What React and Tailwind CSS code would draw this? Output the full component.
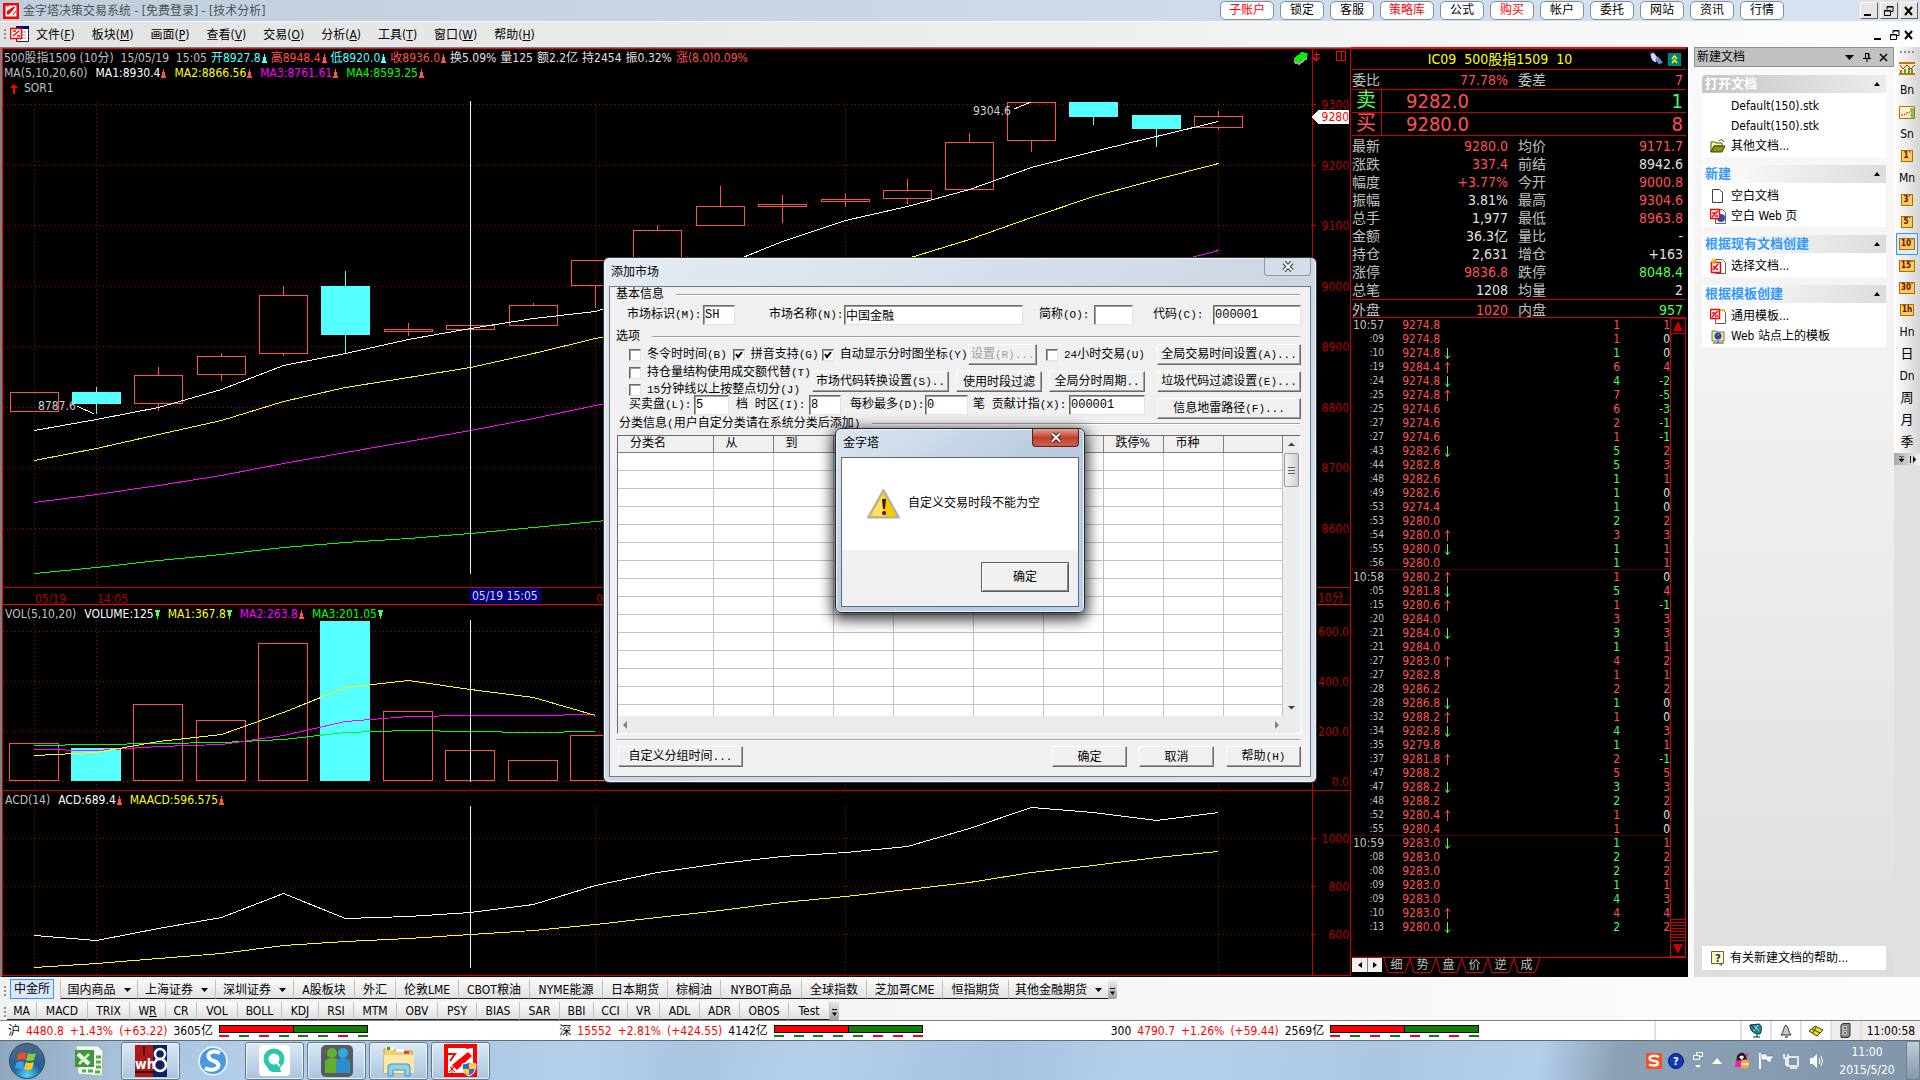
import React from "react";

const RED = "#ff5050";
const CYAN = "#54ffff";

const candleX = [34, 96, 158, 221, 283, 345, 408, 470, 533, 595, 657, 720, 782, 845, 907, 969, 1031, 1093, 1156, 1218];

// [body top, body bottom, high, low, falling]
const candles = [
  [392, 411, 392, 411, false],
  [392, 403, 387, 414, true],
  [375, 403, 367, 411, false],
  [356, 374, 353, 381, false],
  [295, 353, 286, 356, false],
  [286, 334, 271, 354, true],
  [329, 331, 323, 336, false],
  [325, 329, 325, 329, false],
  [305, 325, 303, 325, false],
  [260, 285, 260, 308, false],
  [230, 262, 225, 262, false],
  [206, 225, 186, 225, false],
  [204, 206, 195, 223, false],
  [199, 201, 194, 207, false],
  [190, 198, 179, 204, false],
  [142, 189, 133, 189, false],
  [102, 140, 102, 152, false],
  [102, 116, 102, 125, true],
  [115, 128, 115, 147, true],
  [116, 127, 111, 130, false],
];

const volumeTops = [743, 748, 704, 720, 643, 621, 711, 750, 760, 735];
const line = (ys, xs = candleX) => ys.map((y, i) => `${xs[i] + 0.5},${y + 0.5}`).join(" ");

const ma1 = line([430, 419, 407, 389, 365, 353, 339, 328, 318, 311, 290, 266, 241, 220, 206, 189, 167, 151, 136, 121]);
const ma2 = line([460, 448, 434, 420, 401, 387, 377, 367, 353, 338, 325, 308, 291, 275, 258, 239, 217, 196, 179, 163]);
const ma3 = line([502, 494, 485, 475, 463, 452, 441, 430, 418, 405, 392, 378, 364, 349, 333, 317, 300, 283, 266, 250]);
const ma4 = line([573, 567, 560, 554, 547, 542, 538, 533, 527, 521, 515, 508, 501, 494, 486, 478, 470, 462, 454, 446]);
const vma1 = line([755, 752, 741, 734, 712, 687, 680, 689, 697, 715]);
const vma2 = line([749, 750, 746, 744, 735, 721, 716, 715, 715, 714]);
const vma3 = line([745, 744, 743, 742, 739, 732, 730, 731, 732, 731]);
const acd = line([935, 940, 928, 917, 893, 918, 916, 912, 904, 885, 872, 863, 856, 852, 846, 828, 807, 812, 820, 812]);
const maacd = line([967, 963, 958, 953, 945, 941, 938, 934, 930, 924, 917, 910, 902, 896, 889, 882, 872, 865, 857, 851]);

const gridX = [34, 96, 470, 595, 845, 1218];

function Grid({ ys, labels, top, bottom }) {
  return (
    <g>
      <g stroke="#b00000" strokeDasharray="1 3" fill="none">
        {ys.map((y) => <path key={y} d={`M3 ${y}.5H1312`} />)}
        {gridX.map((x) => <path key={x} d={`M${x}.5 ${top}V${bottom}`} />)}
      </g>
      <g fill="#b40000" fontSize="12" textAnchor="end">
        {ys.map((y, i) => <text key={y} x="1349" y={y + 5}>{labels[i]}</text>)}
      </g>
      <g stroke="#c80000">{ys.map((y) => <path key={y} d={`M1312 ${y}.5h4`} />)}</g>
    </g>
  );
}

const Up = () => <svg className="inline-block" width="6" height="10" viewBox="0 0 6 10"><path d="M3 0h1v3h1v4h1v2H1V7h1V3h1z" fill={RED} /></svg>;
const UpC = () => <svg className="inline-block" width="6" height="10" viewBox="0 0 6 10"><path d="M3 0h1v3h1v4h1v2H1V7h1V3h1z" fill={CYAN} /></svg>;
const Dn = () => <svg className="inline-block" width="6" height="10" viewBox="0 0 6 10"><path d="M1 0h5v2H5v4H4v3H3V6H2V2H1z" fill="#50ff50" /></svg>;

function Charts() {
  return (
    <section className="flex min-w-0 flex-1 flex-col bg-black text-[12px] leading-[15px] whitespace-nowrap">
      <div className="grid min-h-0 flex-[558_1_0px]">
        <svg className="col-start-1 row-start-1 h-full w-full" viewBox="0 47 1351 558" preserveAspectRatio="none" shapeRendering="crispEdges">
          <rect x="0" y="47" width="2" height="558" fill="#808080" />
          <rect x="0" y="47" width="1351" height="1" fill="#808080" />
          <Grid ys={[104, 165, 225, 286, 346, 407, 467, 528]} labels={["9300", "9200", "9100", "9000", "8900", "8800", "8700", "8600"]} top={101} bottom={587} />
          <g stroke="#ff0000" fill="none">
            <path d="M2 48.5H1351M2.5 48V605M2 604.5H1351" />
            <path d="M3 587.5H1351M1312.5 49V605M1350.5 49V605" stroke="#c80000" />
          </g>
          {candles.map(([t, b, h, l, fall], i) => {
            const x = candleX[i];
            return (
              <g key={x} stroke={fall ? CYAN : RED} fill={fall ? CYAN : "none"}>
                {h < t && <path d={`M${x}.5 ${h}V${t}`} />}
                {l > b && <path d={`M${x}.5 ${b}V${l}`} />}
                <rect x={x - 23.5} y={t + 0.5} width="48" height={b - t} />
              </g>
            );
          })}
          <g fill="none">
            <polyline points={ma4} stroke="#00ff00" />
            <polyline points={ma3} stroke="#ff00ff" />
            <polyline points={ma2} stroke="#ffff00" />
            <path d="M470.5 101V574" stroke="#d8ffff" />
            <polyline points={ma1} stroke="#ffffff" />
            <path d="M77 406 94 414M1014 109 1031 102" stroke="#ffffff" />
          </g>
          <g fontSize="12" fill="#c8d0d8">
            <text x="38" y="410">8787.6</text>
            <text x="973" y="115">9304.6</text>
          </g>
          <g fontSize="12" fill="#b40000">
            <text x="35" y="603">05/19</text>
            <text x="97" y="603">14:05</text>
            <text x="596" y="603">09:25</text>
            <text x="1318" y="602">10分</text>
          </g>
          <rect x="470" y="588" width="71" height="15" fill="#000080" />
          <text x="472" y="600" fontSize="12" fill="#d8d8e8">05/19 15:05</text>
          <path d="M1312 117 1318 110H1349V124H1318z" fill="#fff" />
          <text x="1349" y="121" fontSize="12" textAnchor="end" fill="#ff0000">9280</text>
          <g>
            <path d="M1294 58 1302 52 1308 54 1307 57 1299 63 1294 61z" fill="#00f000" />
            <path d="M1294 62 1299 64 1307 58" stroke="#a0a0a0" strokeWidth="2" fill="none" />
            <path d="M1316.500 52V61M1314 54H1320M1313 57 1316 61 1320 57" stroke="#f00" fill="none" />
            <rect x="1336.500" y="51.500" width="9" height="9" stroke="#f00" fill="none" />
            <path d="M1341.500 52V61" stroke="#f00" />
          </g>
        </svg>
        <div className="col-start-1 row-start-1 self-start pt-1 pl-1 text-[#c0c0c0]">
          <div className="flex gap-1">
            <span>500股指1509 (10分)&nbsp; 15/05/19&nbsp; 15:05</span>
            <span className="text-[#54ffff]">开8927.8<UpC /></span>
            <span className="text-[#ff5050]">高8948.4<Up /></span>
            <span className="text-[#54ffff]">低8920.0<UpC /></span>
            <span className="text-[#ff5050]">收8936.0<Up /></span>
            <span className="text-[#e0e0e0]">换5.09%</span>
            <span className="text-[#e0e0e0]">量125</span>
            <span className="text-[#e0e0e0]">额2.2亿</span>
            <span className="text-[#e0e0e0]">持2454</span>
            <span className="text-[#e0e0e0]">振0.32%</span>
            <span className="text-[#ff5050]">涨(8.0)0.09%</span>
          </div>
          <div className="flex gap-2">
            <span>MA(5,10,20,60)</span>
            <span className="text-white">MA1:8930.4<Up /></span>
            <span className="text-[#ffff00]">MA2:8866.56<Up /></span>
            <span className="text-[#ff00ff]">MA3:8761.61<Up /></span>
            <span className="text-[#00ff00]">MA4:8593.25<Up /></span>
          </div>
          <div className="flex items-center gap-1 pl-1">
            <svg width="12" height="10" viewBox="0 0 12 10"><path d="M6 0 10 4H7V10H5V4H2z" fill="#f00" /></svg>
            <span>SOR1</span>
          </div>
        </div>
      </div>
      <div className="grid min-h-0 flex-[186_1_0px]">
        <svg className="col-start-1 row-start-1 h-full w-full" viewBox="0 605 1351 186" preserveAspectRatio="none" shapeRendering="crispEdges">
          <rect x="0" y="605" width="2" height="186" fill="#808080" />
          <Grid ys={[631, 681, 731, 781]} labels={["600.0", "400.0", "200.0", "0.0"]} top={620} bottom={790} />
          <path d="M2.500 605V791M2 790.5H1351M1312.500 605V791M1350.500 605V791" stroke="#c80000" fill="none" />
          {volumeTops.map((t, i) => {
            const fall = i === 1 || i === 5;
            return <rect key={i} x={candleX[i] - 24.5} y={t + 0.5} width="49" height={780 - t} stroke={fall ? CYAN : RED} fill={fall ? CYAN : "none"} />;
          })}
          <g fill="none">
            <polyline points={vma3} stroke="#00ff00" />
            <polyline points={vma2} stroke="#ff00ff" />
            <polyline points={vma1} stroke="#ffff00" />
            <path d="M470.500 620V782" stroke="#d8ffff" />
          </g>
        </svg>
        <div className="col-start-1 row-start-1 flex gap-2 self-start pt-[2px] pl-[5px]">
          <span className="text-[#c0c0c0]">VOL(5,10,20)</span>
          <span className="text-white">VOLUME:125<Dn /></span>
          <span className="text-[#ffff00]">MA1:367.8<Dn /></span>
          <span className="text-[#ff00ff]">MA2:263.8<Up /></span>
          <span className="text-[#00ff00]">MA3:201.05<Dn /></span>
        </div>
      </div>
      <div className="grid min-h-0 flex-[186_1_0px]">
        <svg className="col-start-1 row-start-1 h-full w-full" viewBox="0 791 1351 186" preserveAspectRatio="none" shapeRendering="crispEdges">
          <rect x="0" y="791" width="2" height="186" fill="#808080" />
          <Grid ys={[838, 886, 934]} labels={["1000", "800", "600"]} top={806} bottom={975} />
          <path d="M2.500 791V976M2 975.5H1351M1312.500 791V976M1350.500 791V976" stroke="#c80000" fill="none" />
          <g fill="none">
            <polyline points={maacd} stroke="#ffff00" />
            <polyline points={acd} stroke="#ffffff" />
            <path d="M470.500 806V968" stroke="#d8ffff" />
          </g>
        </svg>
        <div className="col-start-1 row-start-1 flex gap-2 self-start pt-[2px] pl-[5px]">
          <span className="text-[#c0c0c0]">ACD(14)</span>
          <span className="text-white">ACD:689.4<Up /></span>
          <span className="text-[#ffff00]">MAACD:596.575<Up /></span>
        </div>
      </div>
    </section>
  );
}

const R = "text-[#ff5050]";
const G = "text-[#50ff50]";
const W = "text-[#e0e0e0]";

const quoteRows = [
  ["最新", "9280.0", R, "均价", "9171.7", R],
  ["涨跌", "337.4", R, "前结", "8942.6", W],
  ["幅度", "+3.77%", R, "今开", "9000.8", R],
  ["振幅", "3.81%", W, "最高", "9304.6", R],
  ["总手", "1,977", W, "最低", "8963.8", R],
  ["金额", "36.3亿", W, "量比", "-", W],
  ["持仓", "2,631", W, "增仓", "+163", W],
  ["涨停", "9836.8", R, "跌停", "8048.4", G],
  ["总笔", "1208", W, "均量", "2", W],
];

const ticks = `10:57 9274.8 - 1r 1
:09 9274.8 - 1r 0
:10 9274.8 d 1g 0
:19 9284.4 u 6r 4
:24 9274.8 d 4g -2
:25 9274.8 u 7r -5
:25 9274.6 - 6r -3
:27 9274.6 - 2r -1
:27 9274.6 - 1r -1
:43 9282.6 d 5g 2
:44 9282.8 - 5g 3
:48 9282.6 - 1g 1
:49 9282.6 - 1g 0
:53 9274.4 - 1g 0
:53 9280.0 - 2g 2
:54 9280.0 u 3r 3
:55 9280.0 d 1g 1
:56 9280.0 - 1g 1
10:58 9280.2 u 1r 0
:05 9281.8 d 5g 4
:15 9280.6 u 1r -1
:20 9284.0 - 3r 3
:21 9284.0 d 3g 3
:21 9284.0 - 1g 1
:27 9283.0 u 4r 2
:27 9282.8 - 1r 1
:28 9286.2 - 2r 2
:28 9286.8 d 1g 0
:32 9288.2 u 1r 0
:34 9282.8 d 4g 3
:35 9279.8 - 1g 1
:37 9281.8 u 2r -1
:47 9288.2 - 5r 5
:47 9288.2 d 3g 3
:48 9288.2 - 2g 2
:52 9280.4 u 1r 0
:55 9280.4 - 1r 0
10:59 9283.0 d 1g 1
:08 9283.0 - 2g 2
:08 9283.0 - 2g 2
:09 9283.0 - 1g 1
:09 9283.0 - 4g 3
:10 9283.0 u 4r 4
:13 9280.0 d 2g 2`.split("\n").map((r) => r.split(" "));

function QuoteRow({ row }) {
  return (
    <div className="grid grid-cols-[60px_96px_10px_60px_1fr] text-[#c0c0c0]">
      <span>{row[0]}</span>
      <span className={`text-right ${row[2]}`}>{row[1]}</span>
      <span />
      <span>{row[3]}</span>
      <span className={`pr-[3px] text-right ${row[5]}`}>{row[4]}</span>
    </div>
  );
}

function QuotePanel() {
  return (
    <section className="flex w-[337px] shrink-0 flex-col border-t-2 border-r-2 border-t-[#ff0000] border-r-black bg-black pl-px text-[14px] leading-[18px] whitespace-nowrap">
      <div className="grid h-[21px] grid-cols-[1fr_38px] items-center border-b border-[#c80000] text-[#ffff00]">
        <span className="text-center whitespace-pre">IC09  500股指1509  10</span>
        <span className="flex items-center gap-1">
          <svg width="16" height="16" viewBox="0 0 16 16"><path d="M1 1h5v2H3z" fill="#c00000" /><path d="M2 3 6 2 9 6 8 12 4 9z" fill="#c8d8f8" /><path d="M9 6 14 12M8 8l4 5" stroke="#7890c8" strokeWidth="2" /><path d="M2 2v5M7 11l5 4" stroke="#0000c0" /></svg>
          <svg width="13" height="13" viewBox="0 0 13 13"><path d="M0 0h13v13H0z" fill="#008080" /><path d="m4 6 2.500-3L9 6M4 10l2.500-3L9 10" stroke="#ff0" fill="none" strokeWidth="1.500" /></svg>
        </span>
      </div>
      <div className="h-5 border-b border-[#c80000] leading-[20px]"><QuoteRow row={["委比", "77.78%", R, "委差", "7", R]} /></div>
      <div className="flex h-[23px] items-center border-b border-[#c80000] text-[20px] leading-[20px]">
        <span className={`h-full w-[30px] border-r border-[#c80000] pl-1 ${G}`}>卖</span>
        <span className={`flex-1 pl-6 ${R}`}>9282.0</span><span className={`pr-[3px] ${G}`}>1</span>
      </div>
      <div className="flex h-[23px] items-center border-b border-[#c80000] text-[20px] leading-[20px]">
        <span className={`h-full w-[30px] border-r border-[#c80000] pl-1 ${R}`}>买</span>
        <span className={`flex-1 pl-6 ${R}`}>9280.0</span><span className={`pr-[3px] ${R}`}>8</span>
      </div>
      <div className="border-b border-[#c80000] pt-[1px]">{quoteRows.map((r) => <QuoteRow key={r[0]} row={r} />)}</div>
      <div className="h-[18px] border-b border-[#c80000] pt-[1px] leading-[18px]"><QuoteRow row={["外盘", "1020", R, "内盘", "957", G]} /></div>
      <div className="flex min-h-0 flex-1">
        <table className="flex-1 self-start border-collapse text-[12px] leading-[14px]">
          <tbody>
            {ticks.map(([t, p, a, v, d], i) => (
              <tr key={i} className={i === 18 || i === 37 ? "h-[14px] shadow-[0_-1px_0_0_#500000]" : "h-[14px]"}>
                <td className={t.length > 3 ? "w-8 p-0 text-right text-[#c0c0c0]" : "w-8 p-0 text-right text-[10px] text-[#c0c0c0]"}>{t}</td>
                <td className={`w-[56px] p-0 text-right ${R}`}>{p}</td>
                <td className="p-0 pl-1">
                  {a !== "-" && (
                    <svg className="block" width="7" height="11" viewBox="0 0 7 11">
                      <path d={a === "u" ? "M3.5 0V11M1 3.500 3.500 .5 6 3.500" : "M3.500 0V11M1 7.500 3.500 10.500 6 7.500"} stroke={a === "u" ? "#ff5050" : "#50ff50"} fill="none" />
                    </svg>
                  )}
                </td>
                <td className={`p-0 text-right ${v.endsWith("r") ? R : G}`}>{v[0]}</td>
                <td className={`w-[50px] p-0 text-right ${d === "0" ? W : d[0] === "-" ? G : R}`}>{d}</td>
              </tr>
            ))}
          </tbody>
        </table>
        <div className="flex w-4 shrink-0 flex-col border border-[#c80000]">
          <button aria-label="向上滚动" className="flex h-[15px] items-center justify-center border-b border-[#c80000]"><svg width="10" height="10" viewBox="0 0 10 10"><path d="M5 0 10 10H0z" fill="#c80000" /></svg></button>
          <div className="flex-1" />
          <div className="flex h-[22px] flex-col justify-between border-y border-[#c80000] py-[2px]">
            {[0, 1, 2, 3, 4, 5].map((i) => <i key={i} className="h-px bg-[#c80000]" />)}
          </div>
          <button aria-label="向下滚动" className="flex h-[15px] items-center justify-center"><svg width="10" height="10" viewBox="0 0 10 10"><path d="M0 0H10L5 10z" fill="#c80000" /></svg></button>
        </div>
      </div>
      <div className="flex h-5 items-start border-t border-[#e00000] text-[12px] leading-[16px] text-[#c0c0c0]">
        <button aria-label="上一页" className="flex h-[14px] w-[15px] items-center justify-center bg-[#f0f0f0]"><svg width="4" height="6" viewBox="0 0 4 6"><path d="M4 0v6L0 3z" /></svg></button>
        <button aria-label="下一页" className="flex h-[14px] w-[15px] items-center justify-center border-l border-[#808080] bg-[#f0f0f0]"><svg width="4" height="6" viewBox="0 0 4 6"><path d="M0 0v6l4-3z" /></svg></button>
        <div className="flex pl-[2px]">
          {["细", "势", "盘", "价", "逆", "成"].map((t) => (
            <div key={t} className="flex w-[26px]">
              <svg width="4" height="15" viewBox="0 0 4 15"><path d="M0 0 4 14.500" stroke="#e00000" fill="none" /></svg>
              <button className="h-[15px] w-[17px] border-b border-[#e00000] text-[12px] leading-[15px]">{t}</button>
              <svg width="5" height="15" viewBox="0 0 5 15"><path d="M0 14.500 5 0" stroke="#e00000" fill="none" /></svg>
            </div>
          ))}
        </div>
      </div>
    </section>
  );
}

const Logo = ({ s = 16 }) => (
  <svg width={s} height={s} viewBox="0 0 16 16" className="shrink-0">
    <path d="M0 0h16v16H0z" fill="#f00" /><path d="M2.500 2.500h11v11h-11z" fill="#fff" />
    <path d="M4 8 10 4h2.500L6 11.500H4z" fill="#f00" /><path d="M3 3h3M10 12l3-4" stroke="#f00" />
  </svg>
);

const FileIcon = ({ type }) => (
  <svg width="16" height="16" viewBox="0 0 16 16" className="shrink-0">
    {type === "open" && <><path d="M1 4h4l1 1h6v3H4l-3 6z" fill="#ffffa0" stroke="#505000" /><path d="M1 14 4 8h11l-3 6z" fill="#909020" stroke="#404000" /><path d="M9 3q3-3 5 1" stroke="#404040" fill="none" /></>}
    {type === "blank" && <path d="M2.500 1.500h7l3 3v10h-10z" fill="#fff" stroke="#404040" />}
    {type === "help" && <><path d="M1.500 1.500h12v12h-5l3 2v-2h-10z" fill="#ffffb0" stroke="#606060" /><text x="5" y="12" fontSize="11" fontWeight="bold" fill="#1020a0">?</text></>}
    {type === "site" && <><path d="M2 3h4l1 1h7v9H2z" fill="#f4ec90" stroke="#707060" /><path d="M3 15h11M8 13v2" stroke="#404040" /><circle cx="8" cy="8" r="3.500" fill="#2040c0" /><path d="M7 6h2v2z" fill="#60e060" /></>}
    {["web", "select", "tpl"].includes(type) && <>
      <path d="M5.500 1.500h7l3 3v11h-10z" fill="#fff" stroke="#606060" />
      {type === "web" && <circle cx="11" cy="10" r="4" fill="#2050c0" />}
      {type === "tpl" && <path d="M5 1h10v2H5z" fill="#e0d020" />}
      <path d={type === "select" ? "M1.500 4.500h9v10h-9z" : "M.5 1.500h9v9h-9z"} fill="#fff" stroke="#f00" strokeWidth="1.500" />
      <path d={type === "select" ? "M3 12 8 6M3 8l5 4" : "M2 9 8 3M2 5h3M5 8h3"} stroke="#f00" strokeWidth="1.500" />
      {type === "select" && <path d="M4 0v6M1 3h6M2 1l4 4M6 1 2 5" stroke="#d8c800" />}
    </>}
  </svg>
);

const docGroups = [
  ["打开文档", true, [[null, "Default(150).stk"], [null, "Default(150).stk"], ["open", "其他文档..."]]],
  ["新建", false, [["blank", "空白文档"], ["web", "空白 Web 页"]]],
  ["根据现有文档创建", false, [["select", "选择文档..."]]],
  ["根据模板创建", false, [["tpl", "通用模板..."], ["site", "Web 站点上的模板"]]],
];

function DocsPanel() {
  return (
    <aside className="flex w-[200px] shrink-0 flex-col bg-gradient-to-b from-[#fafafa] via-[#eeeeee] to-[#dedede] text-[12px] whitespace-nowrap text-black">
      <header className="flex h-5 items-center border border-[#909090] bg-[#c1c1c1] pr-[5px] pl-[2px] leading-[18px]">
        <h2 className="flex-1">新建文档</h2>
        <button aria-label="菜单" className="mr-2"><svg width="10" height="5" viewBox="0 0 10 5"><path d="M0 0h9L4.500 5z" /></svg></button>
        <button aria-label="固定" className="mr-2"><svg width="8" height="9" viewBox="0 0 8 9"><path d="M2 .5h4V5M2.500 0v5M0 5.500h8M4 5.500V9M5.500 1v4" stroke="#000" fill="none" /></svg></button>
        <button aria-label="关闭"><svg width="9" height="9" viewBox="0 0 9 9"><path d="m1 1 7 7M8 1 1 8" stroke="#000" strokeWidth="1.500" /></svg></button>
      </header>
      <div className="flex flex-1 flex-col gap-2 px-2 pt-2">
        {docGroups.map(([title, first, items]) => (
          <section key={title} className="bg-white">
            <h3 className={`flex h-[18px] items-center justify-between rounded-tl-[4px] bg-gradient-to-r pr-[6px] pl-[3px] text-[13px] leading-[18px] font-bold ${first ? "from-[#c6c6c6] to-[#ececec] text-white" : "from-white to-[#dcdcdc] text-[#3399ff]"}`}>
              {title}
              <svg width="6" height="4" viewBox="0 0 6 4"><path d="M3 0 6 4H0z" /></svg>
            </h3>
            <ul className="pt-[3px] pb-px">
              {items.map(([icon, label], i) => (
                <li key={i} className="flex h-5 items-center pl-2">
                  <a href="#doc" className="flex items-center gap-[5px] leading-[18px]">
                    {icon ? <FileIcon type={icon} /> : <span className="w-4" />}{label}
                  </a>
                </li>
              ))}
            </ul>
          </section>
        ))}
        <div className="flex-1" />
        <a href="#help" className="mb-[7px] flex h-6 items-center gap-1 bg-white pl-2"><FileIcon type="help" />有关新建文档的帮助...</a>
      </div>
    </aside>
  );
}

function SideBar() {
  const items = ["ic1", "Bn", "ic2", "Sn", "1′", "Mn", "3′", "5′", "10′", "15′", "30′", "1h", "Hn", "日", "Dn", "周", "月", "季"];
  return (
    <nav className="flex w-[26px] shrink-0 flex-col bg-[#e0e0e0]">
      <div className="flex flex-col items-center rounded-b-[3px] bg-gradient-to-r from-white to-[#d4d4d4] text-[13px] leading-[22px] text-black">
        <svg width="16" height="10" viewBox="0 0 16 10"><path d="M1 5h15" stroke="#909090" strokeWidth="2" strokeDasharray="2 2" /></svg>
        {items.map((t) => {
          if (t === "ic1") return <button key={t} aria-label="分时" className="flex h-[22px] items-center"><svg width="16" height="13" viewBox="0 0 16 13"><path d="M0 1h16M0 12h16" stroke="#c07800" strokeWidth="2" /><path d="M0 2h16v9H0z" fill="#fff0c8" /><path d="m1 3 3 4 4-4 4 4 4-4" stroke="#f00" fill="none" /><path d="M2 11V8M6 11V7M10 11V6M13 11V7" stroke="#009000" strokeWidth="1.500" /></svg></button>;
          if (t === "ic2") return <button key={t} aria-label="盘口" className="flex h-[22px] items-center"><svg width="16" height="13" viewBox="0 0 16 13"><path d="M.5.500h15v12H.5z" fill="#fff0c8" stroke="#b07800" /><path d="M2 9h3l2-2h3l2-3" stroke="#f00" fill="none" strokeDasharray="2 1" /><path d="M11 3h4M12 5h3M12 7h3M11 9h4M12 11h3" stroke="#009000" /></svg></button>;
          if (/[′1]/.test(t)) {
            const on = t === "10′";
            return (
              <button key={t} className={on ? "flex h-[22px] w-[22px] items-center justify-center border border-[#3399ff] bg-[#dcebfb]" : "flex h-[22px] w-[22px] items-center justify-center"}>
                <span className="flex h-3 min-w-3 items-center justify-center border border-[#a87000] bg-[#ffc860] px-px text-[8px] leading-[10px] font-bold text-[#601000]">{t}</span>
              </button>
            );
          }
          return <button key={t} className={t.length > 1 ? "h-[22px] text-[12px]" : "h-[22px] text-[13px]"}>{t}</button>;
        })}
        <div className="flex h-3 w-full items-center justify-center gap-[6px] bg-gradient-to-r from-[#a8a8a8] to-[#f0f0f0]">
          <svg width="5" height="6" viewBox="0 0 5 6"><path d="M0 .5h5M2.500 1v2M0 3h5L2.500 6z" stroke="#000" strokeWidth=".5" /></svg>
          <svg width="6" height="7" viewBox="0 0 6 7"><path d="M.5 0v7" stroke="#000" /><path d="M3 0v7l3-3.500z" /></svg>
        </div>
      </div>
    </nav>
  );
}

// Sets Latin runs in a fixed-width face beside the ideographs.
function T({ children }) {
  return children.split(/([\x21-\x7e]+)/).map((s, i) =>
    i % 2 ? <span key={i} className="font-['Liberation_Mono',monospace] text-[11px]">{s}</span> : s
  );
}

function Field({ id, label, value, labelClass, inputClass }) {
  return (
    <>
      <label htmlFor={id} className={labelClass}><T>{label}</T></label>
      <input id={id} defaultValue={value} className={`h-5 min-w-0 border border-t-[#696969] border-r-[#e3e3e3] border-b-[#e3e3e3] border-l-[#696969] bg-white pb-px pl-px font-['Liberation_Mono','Noto_Sans_CJK_SC',monospace] shadow-[inset_1px_1px_0_#a0a0a0] outline-none ${inputClass}`} />
    </>
  );
}

function Check({ label, on, className }) {
  return (
    <label className={`relative flex h-[15px] items-center gap-[6px] ${className || ""}`}>
      <input type="checkbox" defaultChecked={on} className="peer sr-only" />
      <span className="flex h-3 w-3 items-center justify-center border border-t-[#696969] border-r-[#e3e3e3] border-b-[#e3e3e3] border-l-[#696969] bg-white shadow-[inset_1px_1px_0_#a0a0a0]">
        {on && <svg width="8" height="8" viewBox="0 0 8 8"><path d="m1 3 2 3 4-5" stroke="#000" strokeWidth="2" fill="none" /></svg>}
      </span>
      <span><T>{label}</T></span>
    </label>
  );
}

function Btn({ children, className, off }) {
  return (
    <button disabled={off} className={`h-[21px] border border-t-white border-r-[#696969] border-b-[#696969] border-l-white bg-[#f0f0f0] text-center leading-[18px] shadow-[inset_-1px_-1px_0_#a0a0a0] ${off ? "text-[#a0a0a0]" : "text-black"} ${className}`}>
      <T>{children}</T>
    </button>
  );
}

const Rule = () => <span className="mr-[10px] h-[2px] flex-1 border-t border-[#a0a0a0] bg-white" />;

const CloseX = ({ dark }) => (
  <svg width="12" height="11" viewBox="0 0 12 11"><path d="m2 1.500 8 8M10 1.500l-8 8" stroke={dark ? "#404858" : "#602020"} strokeWidth="4.500" /><path d="m2 1.500 8 8M10 1.500l-8 8" stroke="#fff" strokeWidth="2" /></svg>
);

function MarketDialog() {
  const cols = ["分类名", "从", "到", "", "", "", "", "跌停%", "币种", ""];
  return (
    <div role="dialog" aria-label="添加市场" className="flex w-[714px] flex-col rounded-[6px] border border-[#303840] bg-gradient-to-br from-[#e4ebf3] via-[#cdd7e3] to-[#dce4ee] px-[5px] pb-[5px] text-[12px] whitespace-nowrap text-black shadow-[inset_0_0_0_1px_#f4f8fc]">
      <header className="flex h-[28px] items-center justify-between pl-[2px]">
        <h2>添加市场</h2>
        <button aria-label="关闭添加市场" className="flex h-[18px] w-[47px] items-center justify-center self-start rounded-b-[4px] border border-t-0 border-[#8c98a8] bg-[#d4dde8]"><CloseX dark /></button>
      </header>
      <div className="flex flex-col border border-[#707880] bg-[#f0f0f0] pb-[9px] pl-[6px] leading-[15px]">
        <div className="flex h-[15px] items-center gap-3"><span>基本信息</span><Rule /></div>
        <div className="mt-[3px] flex h-5 items-center pr-[9px] pl-[11px]">
          <Field id="mk" label="市场标识(M):" value="SH" labelClass="w-[76px]" inputClass="w-8" />
          <Field id="nm" label="市场名称(N):" value="中国金融" labelClass="ml-[34px] w-[75px]" inputClass="flex-1" />
          <Field id="sh" label="简称(O):" value="" labelClass="ml-4 w-[55px]" inputClass="w-[39px]" />
          <Field id="cd" label="代码(C):" value="000001" labelClass="ml-5 w-[60px]" inputClass="w-[88px]" />
        </div>
        <div className="mt-[4px] flex h-[15px] items-center gap-3"><span>选项</span><Rule /></div>
        <div className="flex justify-between pr-[9px] pl-[13px]">
          <div className="flex w-[516px] flex-col">
            <div className="flex h-[21px] items-center">
              <Check label="冬令时时间(B)" className="w-[106px]" />
              <Check label="拼音支持(G)" on className="w-[91px]" />
              <Check label="自动显示分时图坐标(Y)" on className="w-[150px]" />
              <Btn off className="w-[70px]">设置(R)...</Btn>
              <Check label="24小时交易(U)" className="ml-[9px]" />
            </div>
            <div className="flex h-[33px]">
              <div className="flex w-[183px] flex-col gap-[2px]">
                <Check label="持仓量结构使用成交额代替(T)" />
                <Check label="15分钟线以上按整点切分(J)" />
              </div>
              <div className="flex flex-1 gap-[7px] pt-[6px]">
                <Btn className="w-[137px]">市场代码转换设置(S)..</Btn>
                <Btn className="w-[86px]">使用时段过滤</Btn>
                <Btn className="flex-1">全局分时周期..</Btn>
              </div>
            </div>
            <div className="-mt-[3px] flex h-5 items-center">
              <Field id="bs" label="买卖盘(L):" value="5" labelClass="w-[65px]" inputClass="w-[35px]" />
              <Field id="tz" label="档  时区(I):" value="8" labelClass="ml-[7px] w-[73px] whitespace-pre" inputClass="w-8" />
              <Field id="ps" label="每秒最多(D):" value="0" labelClass="ml-[9px] w-[75px]" inputClass="w-[43px]" />
              <Field id="ct" label="笔  贡献计指(X):" value="000001" labelClass="ml-[5px] w-[96px] whitespace-pre" inputClass="flex-1" />
            </div>
          </div>
          <div className="flex w-36 flex-col gap-[6px]">
            <Btn className="w-full">全局交易时间设置(A)...</Btn>
            <Btn className="w-full">垃圾代码过滤设置(E)...</Btn>
            <Btn className="w-full">信息地雷路径(F)...</Btn>
          </div>
        </div>
        <div className="-mt-[3px] flex h-[15px] items-center gap-3 pl-[3px]"><span><T>分类信息(用户自定分类请在系统分类后添加)</T></span><Rule /></div>
        <div className="mt-1 mr-[9px] ml-px flex h-[299px] flex-col border border-t-[#696969] border-r-white border-b-white border-l-[#696969]">
          <div className="flex min-h-0 flex-1">
            <div className="flex-1 overflow-hidden bg-white">
              <table className="w-full table-fixed border-collapse">
                <colgroup>
                  <col className="w-[95px]" /><col className="w-[60px]" /><col className="w-[60px]" /><col className="w-[60px]" /><col className="w-[80px]" /><col className="w-[70px]" /><col className="w-[60px]" /><col className="w-[60px]" /><col className="w-[60px]" /><col />
                </colgroup>
                <thead>
                  <tr className="h-4 bg-[#f0f0f0]">
                    {cols.map((c, i) => <th key={i} className="border-r border-b border-[#808080] p-0 pl-3 text-left leading-[15px] font-normal">{c}</th>)}
                  </tr>
                </thead>
                <tbody>
                  {Array.from({ length: 15 }, (_, r) => (
                    <tr key={r} className="h-[18px]">{cols.map((_, i) => <td key={i} className="border-r border-b border-[#c0c0c0] p-0" />)}</tr>
                  ))}
                </tbody>
              </table>
            </div>
            <div className="flex w-[17px] flex-col items-center bg-[#ececec]">
              <svg width="17" height="17" viewBox="0 0 17 17"><path d="M5 10h7L8.500 6.500z" fill="#404040" /></svg>
              <div className="flex h-[34px] w-[15px] flex-col items-center justify-center gap-[2px] rounded-[2px] border border-[#989898] bg-gradient-to-r from-[#f4f4f4] to-[#d0d0d0]">
                <i className="h-px w-[7px] bg-[#606060]" /><i className="h-px w-[7px] bg-[#606060]" /><i className="h-px w-[7px] bg-[#606060]" />
              </div>
              <div className="flex-1" />
              <svg width="17" height="17" viewBox="0 0 17 17"><path d="M5 7h7l-3.500 3.500z" fill="#404040" /></svg>
            </div>
          </div>
          <div className="flex h-[17px] items-center justify-between bg-[#ececec] pr-5 pl-1">
            <svg width="6" height="8" viewBox="0 0 6 8"><path d="M5 0v8L1 4z" fill="#808080" /></svg>
            <svg width="6" height="8" viewBox="0 0 6 8"><path d="M1 0v8l4-4z" fill="#808080" /></svg>
          </div>
        </div>
        <div className="mt-[5px] flex"><Rule /></div>
        <div className="mt-[5px] flex gap-3 pr-[9px] pl-[2px]">
          <Btn className="mr-auto w-[125px]">自定义分组时间...</Btn>
          <Btn className="w-[75px]">确定</Btn>
          <Btn className="w-[75px]">取消</Btn>
          <Btn className="w-[75px]">帮助(H)</Btn>
        </div>
      </div>
    </div>
  );
}

function MessageBox() {
  return (
    <div role="alertdialog" aria-label="金字塔" className="flex w-[250px] flex-col rounded-[6px] border border-[#202830] bg-gradient-to-br from-[#dce6f1] via-[#b8cbe0] to-[#b4d2f0] px-[5px] pb-[5px] text-[12px] whitespace-nowrap text-black shadow-[0_4px_14px_3px_rgba(0,0,0,0.75),inset_0_0_0_1px_#eef4fa]">
      <header className="flex h-7 items-center justify-between pl-[2px]">
        <h2>金字塔</h2>
        <button aria-label="关闭提示" className="flex h-[18px] w-[47px] items-center justify-center self-start rounded-b-[4px] border border-t-0 border-[#5a2020] bg-gradient-to-b from-[#e0a094] via-[#c0402c] to-[#d0604c]"><CloseX /></button>
      </header>
      <div className="border border-[#606870] bg-[#f0f0f0]">
        <div className="flex h-[92px] items-center gap-2 bg-white pl-[25px]">
          <svg width="33" height="30" viewBox="0 0 33 30"><path d="M16.500 1 32 28.500H1z" fill="#f8c800" stroke="#b0b0b0" strokeWidth="2" strokeLinejoin="round" /><path d="M16.500 4 16.500 27H4z" fill="#ffe060" /><path d="M15 10h4l-1 10h-2z" fill="#302000" /><circle cx="17" cy="24" r="2" fill="#302000" /></svg>
          <span className="pb-[2px]">自定义交易时段不能为空</span>
        </div>
        <div className="flex justify-end pt-3 pr-[9px] pb-[14px]">
          <button className="h-[30px] w-[88px] border border-[#606060] bg-[#f0f0f0] shadow-[inset_1px_1px_0_#fff,inset_-1px_-1px_0_#808080]">确定</button>
        </div>
      </div>
    </div>
  );
}

const topButtons = ["子账户", "锁定", "客服", "策略库", "公式", "购买", "帐户", "委托", "网站", "资讯", "行情"];
const menus = [["文件", "F"], ["板块", "M"], ["画面", "P"], ["查看", "V"], ["交易", "O"], ["分析", "A"], ["工具", "T"], ["窗口", "W"], ["帮助", "H"]];

const MinIcon = () => <svg width="12" height="12" viewBox="0 0 12 12"><path d="M1 10h7" stroke="#000" strokeWidth="2" /></svg>;
const RestoreIcon = () => <svg width="12" height="12" viewBox="0 0 12 12"><path d="M4 4.500V1.500h6v5H8M4 2h6M1.500 5.500h6v5h-6zM1 6h7" stroke="#000" fill="none" /></svg>;
const XIcon = () => <svg width="12" height="12" viewBox="0 0 12 12"><path d="m2 2 7 8M9 2l-7 8" stroke="#000" strokeWidth="2" /></svg>;

const Grip = () => <svg width="4" height="14" viewBox="0 0 4 14" className="shrink-0"><path d="M2 1v12" stroke="#909090" strokeWidth="2" strokeDasharray="2 2" /></svg>;
const Caret = () => <svg width="7" height="4" viewBox="0 0 7 4"><path d="M0 0h7L3.500 4z" /></svg>;
const Overflow = () => <button aria-label="更多" className="flex h-[19px] w-[9px] items-end justify-center rounded-r-[2px] bg-gradient-to-b from-[#f0f0f0] to-[#a0a0a0] pb-1"><svg width="5" height="7" viewBox="0 0 5 7"><path d="M0 .5h5" stroke="#000" /><path d="M0 3.500h5L2.500 7z" /></svg></button>;

const boards = [["国内商品", "w-[77px]", 1], ["上海证券", "w-[78px]", 1], ["深圳证券", "w-[78px]", 1], ["A股板块", "w-[61px]"], ["外汇", "w-[41px]"], ["伦敦LME", "w-[63px]"], ["CBOT粮油", "w-[71px]"], ["NYME能源", "w-[73px]"], ["日本期货", "w-[65px]"], ["棕榈油", "w-[53px]"], ["NYBOT商品", "w-[81px]"], ["全球指数", "w-[65px]"], ["芝加哥CME", "w-[76px]"], ["恒指期货", "w-[66px]"], ["其他金融期货", "w-[100px]", 1]];
const indicators = [["MA", "w-[30px]"], ["MACD", "w-[51px]"], ["TRIX", "w-[42px]"], ["WR", "w-[36px]"], ["CR", "w-[31px]"], ["VOL", "w-[41px]"], ["BOLL", "w-[44px]"], ["KDJ", "w-[37px]"], ["RSI", "w-[35px]"], ["MTM", "w-[43px]"], ["OBV", "w-[41px]"], ["PSY", "w-[39px]"], ["BIAS", "w-[43px]"], ["SAR", "w-[40px]"], ["BBI", "w-[34px]"], ["CCI", "w-[34px]"], ["VR", "w-[32px]"], ["ADL", "w-[40px]"], ["ADR", "w-[40px]"], ["OBOS", "w-[49px]"], ["Test", "w-[41px]"]];

function IndexCell({ name, price, pct, chg, amt, dashes }) {
  return (
    <div className="flex min-w-0 flex-[550_1_0px] items-center gap-[6px] pl-2">
      <span>{name}</span>
      <span className="text-[#ff0000]">{price}</span>
      <span className="text-[#ff0000]">{pct}</span>
      <span className="text-[#ff0000]">{chg}</span>
      <span>{amt}</span>
      <span className="flex w-[149px] flex-col gap-[2px]">
        <span className="flex h-2 border border-black"><i className="flex-1 bg-[#ff0000]" /><i className="flex-1 border-l border-black bg-[#108000]" /></span>
        <span className="flex h-[2px] justify-between">
          {dashes.split("").map((d, i) => <i key={i} className={d === "r" ? "h-[2px] w-[10px] bg-[#ff0000]" : "h-[2px] w-[10px] bg-[#108000]"} />)}
        </span>
      </span>
    </div>
  );
}

function StatusBar() {
  const cell = "flex h-full items-center justify-center border-l-2 border-[#e4e0e0]";
  return (
    <div className="flex h-5 items-center border-t border-[#808080] bg-white text-[12px] leading-[18px] whitespace-nowrap text-black">
      <IndexCell name="沪" price="4480.8" pct="+1.43%" chg="(+63.22)" amt="3605亿" dashes="rgrgggrg" />
      <IndexCell name="深" price="15552" pct="+2.81%" chg="(+424.55)" amt="4142亿" dashes="gggggrrr" />
      <IndexCell name="300" price="4790.7" pct="+1.26%" chg="(+59.44)" amt="2569亿" dashes="rgrgrgrg" />
      <span className={`${cell} w-[86px]`} />
      <span className={`${cell} w-[30px]`}><svg width="15" height="15" viewBox="0 0 15 15"><path d="M2 2c0 7 5 9 10 9 3-6 1-9-1-10z" fill="#208898" stroke="#103040" /><path d="m3 2 6 6M5 14h7M9 11v3" stroke="#102040" /><path d="m6 3 5 5M10 2 6 8" stroke="#80f0f0" /></svg></span>
      <span className={`${cell} w-[30px]`}><svg width="14" height="14" viewBox="0 0 14 14"><path d="M7 1c3 2 2 7 5 10H2C5 8 4 3 7 1z" fill="#c8c8c0" stroke="#303030" /><path d="M6 13h3" stroke="#000" /></svg></span>
      <span className={`${cell} w-[30px]`}><svg width="16" height="12" viewBox="0 0 16 12"><path d="M1 6 7 1l8 4-6 6z" fill="#e8e020" stroke="#404020" /><path d="m4 4 8 4M8 2 5 8" stroke="#404020" /></svg></span>
      <span className={`${cell} w-[30px] bg-[#f0ecec]`}><svg width="13" height="15" viewBox="0 0 13 15"><path d="M2 2 4 .5h7V13l-2 1.500H2z" fill="#888" stroke="#303030" /><path d="M3 3h5v4H3zM3 8h5v4H3z" fill="#c0c0c0" /><path d="M5 5h2M5 10h2" stroke="#000" /></svg></span>
      <span className={`${cell} w-[60px] bg-[#f0ecec]`}>11:00:58</span>
    </div>
  );
}

const TaskBtn = ({ label, framed, children }) => (
  <button aria-label={label} className={framed ? "flex h-[38px] w-[59px] items-center justify-center rounded-[3px] border border-[#5f7890] bg-gradient-to-b from-[#dce9f5] to-[#a9c4de] shadow-[inset_0_0_0_1px_rgba(255,255,255,0.7)]" : "flex h-[38px] w-[59px] items-center justify-center"}>{children}</button>
);

function TaskBar() {
  return (
    <footer className="flex h-10 shrink-0 items-center border-t border-[#5c6c7c] bg-[linear-gradient(100deg,#8fa5bb_0%,#a6c0da_6%,#b4d0eb_14%,#a8c3df_22%,#b4d0eb_30%,#a9c5e0_36%,#b4d0eb_42%,#a6c2de_52%,#b5d1ec_60%,#abc7e2_72%,#b3cfea_80%,#8ca1b6_84%,#8195ab_100%)] whitespace-nowrap">
      <button aria-label="开始" className="mr-[13px] ml-2">
        <svg width="38" height="38" viewBox="0 0 38 38">
          <defs><radialGradient id="orb" cx="50%" cy="90%" r="80%"><stop offset="0" stopColor="#50d8ff" /><stop offset=".5" stopColor="#20609c" /><stop offset="1" stopColor="#486888" /></radialGradient></defs>
          <circle cx="19" cy="19" r="17.500" fill="url(#orb)" stroke="#304860" />
          <path d="M10 12q4-3 8-1l-1 7q-4-2-8 1z" fill="#f05020" /><path d="M20 11q4 2 8 0l-2 7q-4 2-8 0z" fill="#90c830" />
          <path d="M8 21q4-3 8-1l-1 7q-4-2-8 0z" fill="#38a0e8" /><path d="M18 20q4 2 8 0l-2 7q-4 2-8 0z" fill="#ffc820" />
        </svg>
      </button>
      <div className="flex items-center gap-[3px]">
        <TaskBtn label="Excel"><svg width="32" height="32" viewBox="0 0 32 32"><path d="M3 1h22l5 5-1 25-24-2z" fill="#f4faf2" stroke="#a8b8a8" /><path d="M2 5h19v17H2z" fill="#3c9a3c" /><path d="m5 9 11 10" stroke="#fff" strokeWidth="4" /><path d="M16 9 6 19" stroke="#d8f0c0" strokeWidth="2.500" /><path d="M23 12h5M23 17h5M23 22h5M9 26h4M15 26h5M22 27h5" stroke="#58a850" strokeWidth="3" /></svg></TaskBtn>
        <TaskBtn label="wh8" framed><svg width="32" height="32" viewBox="0 0 32 32"><path d="M0 0h18v32H0z" fill="#b01818" /><path d="M18 0h14v32H18z" fill="#102060" /><path d="M9 2v8M0 27h18" stroke="#300" strokeWidth="2" /><text x="0" y="24" fontSize="14" fontWeight="bold" fill="#fff">wh</text><circle cx="25" cy="9" r="5" fill="none" stroke="#fff" strokeWidth="2.500" /><circle cx="25" cy="20" r="6" fill="none" stroke="#fff" strokeWidth="2.500" /></svg></TaskBtn>
        <TaskBtn label="搜狗"><svg width="32" height="32" viewBox="0 0 32 32"><circle cx="16" cy="16" r="15" fill="#4a98e0" /><circle cx="16" cy="16" r="14" fill="none" stroke="#e8f4ff" strokeWidth="2" /><path d="M23 8c-8-4-15 1-10 6 4 3 10 3 8 8-2 3-8 4-13 1" fill="none" stroke="#fff" strokeWidth="4" /></svg></TaskBtn>
        <TaskBtn label="Q" framed><svg width="31" height="31" viewBox="0 0 31 31"><rect width="31" height="31" rx="4" fill="#fff" /><circle cx="15" cy="14" r="8" fill="none" stroke="#28c8a8" strokeWidth="5" /><path d="M15 22h6l1 5h-8q-5-1-6-6z" fill="#28c8a8" /><path d="m17 17 4 4" stroke="#fff" strokeWidth="2" /></svg></TaskBtn>
        <TaskBtn label="好友" framed><svg width="32" height="32" viewBox="0 0 32 32"><rect width="32" height="32" rx="5" fill="#585c60" /><circle cx="11" cy="8" r="5" fill="#60b030" /><path d="M4 28V18q0-5 7-5t7 5v10z" fill="#60b030" /><circle cx="22" cy="8" r="5" fill="#30a8e0" /><path d="M15 28V18q0-5 7-5t7 5v10z" fill="#2890d0" /></svg></TaskBtn>
        <TaskBtn label="文件夹" framed><svg width="34" height="32" viewBox="0 0 34 32"><path d="M2 4h10l2 2h16v22H2z" fill="#f0d070" stroke="#c8a040" /><path d="M4 2h8v3H4zM14 4h8v3h-8z" fill="#fff" /><path d="M5 2h3v3H5z" fill="#20a020" /><path d="M22 6h5v3h-5z" fill="#e04040" /><path d="M2 10h30v18H2z" fill="#fae8a8" /><path d="M6 31V22q0-3 3-3h16q3 0 3 3v9h-5v-6H11v6z" fill="#90d0f0" stroke="#4090c0" /></svg></TaskBtn>
        <TaskBtn label="金字塔决策交易系统" framed><svg width="33" height="33" viewBox="0 0 33 33"><path d="M0 0h33v33H0z" fill="#f00" /><path d="M4 4h25v25H4z" fill="#fff" /><path d="m8 21 16-13 4 4-15 14z" fill="#f00" /><path d="M4 10h7l-5 7M22 4l6-1" stroke="#f00" strokeWidth="2" fill="none" /><path d="M5 28l6-6M6 23l5 5M8 22v7" stroke="#f00" /><path d="M25 18q3 2 7 2 0 10-7 12-7-2-7-12 4 0 7-2z" fill="#2870d0" stroke="#fff" /><path d="M25 19v6h6q0-3 .5-5-4 0-6.500-1zM25 25v6q-5-2-6-6z" fill="#ffd020" /></svg></TaskBtn>
      </div>
      <div className="ml-auto flex items-center">
        <svg width="16" height="16" viewBox="0 0 16 16"><rect width="16" height="16" rx="1" fill="#f85020" /><path d="M13 4C7 1 2 4 4 6.500 6 9 12 7 12 10c0 3-6 3-9 1.500" stroke="#fff" strokeWidth="2.500" fill="none" /></svg>
        <svg className="ml-[6px]" width="16" height="16" viewBox="0 0 16 16"><circle cx="8" cy="8" r="7.500" fill="#1038c0" stroke="#081860" /><text x="5" y="12" fontSize="11" fontWeight="bold" fill="#fff">?</text></svg>
        <svg className="ml-[9px]" width="10" height="18" viewBox="0 0 10 18"><path d="M3.500 3V.500h6v4H7M.5 3.500h6v4h-6z" stroke="#fff" fill="none" /><path d="M2 13h6l-3 3z" fill="#fff" /></svg>
        <svg className="ml-[9px]" width="10" height="6" viewBox="0 0 10 6"><path d="M5 0 10 6H0z" fill="#fff" /></svg>
        <svg className="ml-3" width="16" height="17" viewBox="0 0 16 17"><path d="M3 4q5-7 9 0l2 9H2z" fill="#201818" /><path d="M5 5q3-3 5 0l-2 3z" fill="#fff" /><path d="m11 1 4 1-2 3zM2 9q5-2 8 0l-3 6H1z" fill="#f020a0" /><circle cx="11" cy="12" r="4.500" fill="#f8a840" /><path d="M8 12h6" stroke="#fff" strokeWidth="1.500" /></svg>
        <svg className="ml-2" width="17" height="16" viewBox="0 0 17 16"><path d="M2 0v16" stroke="#fff" strokeWidth="2" /><path d="M3 1h6v2h7l-3 4 1 2H9V7H3z" fill="#f4f8fc" stroke="#506070" strokeWidth=".5" /></svg>
        <svg className="ml-2" width="16" height="16" viewBox="0 0 16 16"><path d="M5 4h10v9H5z" fill="#8498ac" stroke="#fff" strokeWidth="1.500" /><path d="M7 15h7M1 1v4h4V1M3 5v7h3" stroke="#fff" strokeWidth="1.500" fill="none" /></svg>
        <svg className="ml-[10px]" width="15" height="16" viewBox="0 0 15 16"><path d="M1 5h3l4-4v14l-4-4H1z" fill="#fff" /><path d="M10 5q2 3 0 6M12 3q3 5 0 10" stroke="#fff" fill="none" /></svg>
        <div className="ml-3 w-[62px] text-center text-[12px] leading-[18px] text-white">11:00<br />2015/5/20</div>
        <button aria-label="显示桌面" className="ml-2 h-[39px] w-[14px] border border-[#6c8094] bg-gradient-to-b from-[#c0ccd8] to-[#8698aa]" />
      </div>
    </footer>
  );
}

export default function App() {
  return (
    <div className="relative flex h-screen flex-col overflow-hidden bg-[#f4f4f4] font-['DejaVu_Sans_Condensed','Noto_Sans','Noto_Sans_CJK_SC',sans-serif] text-[12px] whitespace-nowrap text-black">
      <header className="flex h-[21px] shrink-0 items-center bg-gradient-to-r from-[#c0cedc] to-[#d6e4f1] pr-[2px] pl-[3px]">
        <Logo />
        <h1 className="ml-1 flex-1 leading-[20px] text-[#485058]">金字塔决策交易系统 - [免费登录] - [技术分析]</h1>
        <div className="mr-[76px] flex gap-[6px]">
          {topButtons.map((t, i) => (
            <button key={t} className={`h-[19px] rounded-[5px] border border-[#7890a8] bg-white leading-[17px] ${t.length > 2 ? "w-[54px]" : "w-11"} ${[0, 3, 5].includes(i) ? "text-[#ff0000]" : ""}`}>{t}</button>
          ))}
        </div>
        <div className="flex gap-[2px]">
          {[["最小化", MinIcon], ["还原", RestoreIcon], ["关闭", XIcon]].map(([n, I]) => (
            <button key={n} aria-label={n} className="flex h-[17px] w-[18px] items-center justify-center border border-t-white border-r-[#606060] border-b-[#606060] border-l-white bg-[#e8e4e0]"><I /></button>
          ))}
        </div>
      </header>
      <nav className="flex h-[26px] shrink-0 items-center border-t border-[#f4f8fc] bg-gradient-to-r from-[#e2e2e2] via-[#ededed] to-[#fdfdfd] pr-[5px] pl-[3px]">
        <Grip />
        <svg className="mr-[7px] ml-[3px]" width="19" height="17" viewBox="0 0 19 17"><path d="M6.500.500h12v15h-12z" fill="#fff" stroke="#202020" /><path d="M6 0h13v3H6z" fill="#000080" /><path d="M12 6h4M12 9h4M12 12h4" stroke="#909090" /><path d="M.5 2.500h11v10H.5z" fill="#fff" stroke="#f00" strokeWidth="1.500" /><path d="m3 10 6-5M3 5h3M7 10h3" stroke="#f00" strokeWidth="1.500" /></svg>
        <div className="flex flex-1 gap-[17px]">
          {menus.map(([t, k]) => <button key={t} className="leading-[20px]">{t}(<u>{k}</u>)</button>)}
        </div>
        <button aria-label="最小化子窗口" className="mr-1"><MinIcon /></button>
        <button aria-label="还原子窗口" className="mr-[2px]"><RestoreIcon /></button>
        <button aria-label="关闭子窗口"><XIcon /></button>
      </nav>
      <main className="flex min-h-0 flex-1">
        <Charts />
        <QuotePanel />
        <div className="w-[6px] shrink-0 bg-[#fafafa]" />
        <DocsPanel />
        <SideBar />
      </main>
      <nav className="flex h-[23px] shrink-0 items-end bg-gradient-to-r from-[#f0f0f0] to-[#fcfcfc] pb-px pl-[3px]">
        <Grip />
        <button className="mr-[6px] ml-[3px] h-5 w-11 border border-[#3399ff] bg-[#d8e8f8] leading-[18px]">中金所</button>
        {boards.map(([t, w, c]) => (
          <button key={t} className={`flex h-[19px] items-center justify-center gap-2 border-b border-l border-b-[#202020] border-l-[#c0c0c0] bg-gradient-to-b from-[#fafafa] to-[#e0e0e0] pt-[2px] ${w}`}>{t}{c && <Caret />}</button>
        ))}
        <Overflow />
      </nav>
      <nav className="flex h-5 shrink-0 items-end bg-gradient-to-r from-[#f0f0f0] to-[#fcfcfc] pl-[3px]">
        <Grip />
        {indicators.map(([t, w]) => (
          <button key={t} className={`h-[18px] border-r border-b border-r-[#c0c0c0] border-b-[#202020] bg-gradient-to-b from-[#fafafa] to-[#e0e0e0] leading-[18px] ${w}`}>{t === "WR" ? <>W<u>R</u></> : t}</button>
        ))}
        <Overflow />
      </nav>
      <StatusBar />
      <TaskBar />
      <div className="pointer-events-none absolute inset-x-0 top-0 bottom-10 grid place-items-center">
        <div className="pointer-events-auto col-start-1 row-start-1"><MarketDialog /></div>
        <div className="pointer-events-auto col-start-1 row-start-1"><MessageBox /></div>
      </div>
    </div>
  );
}
